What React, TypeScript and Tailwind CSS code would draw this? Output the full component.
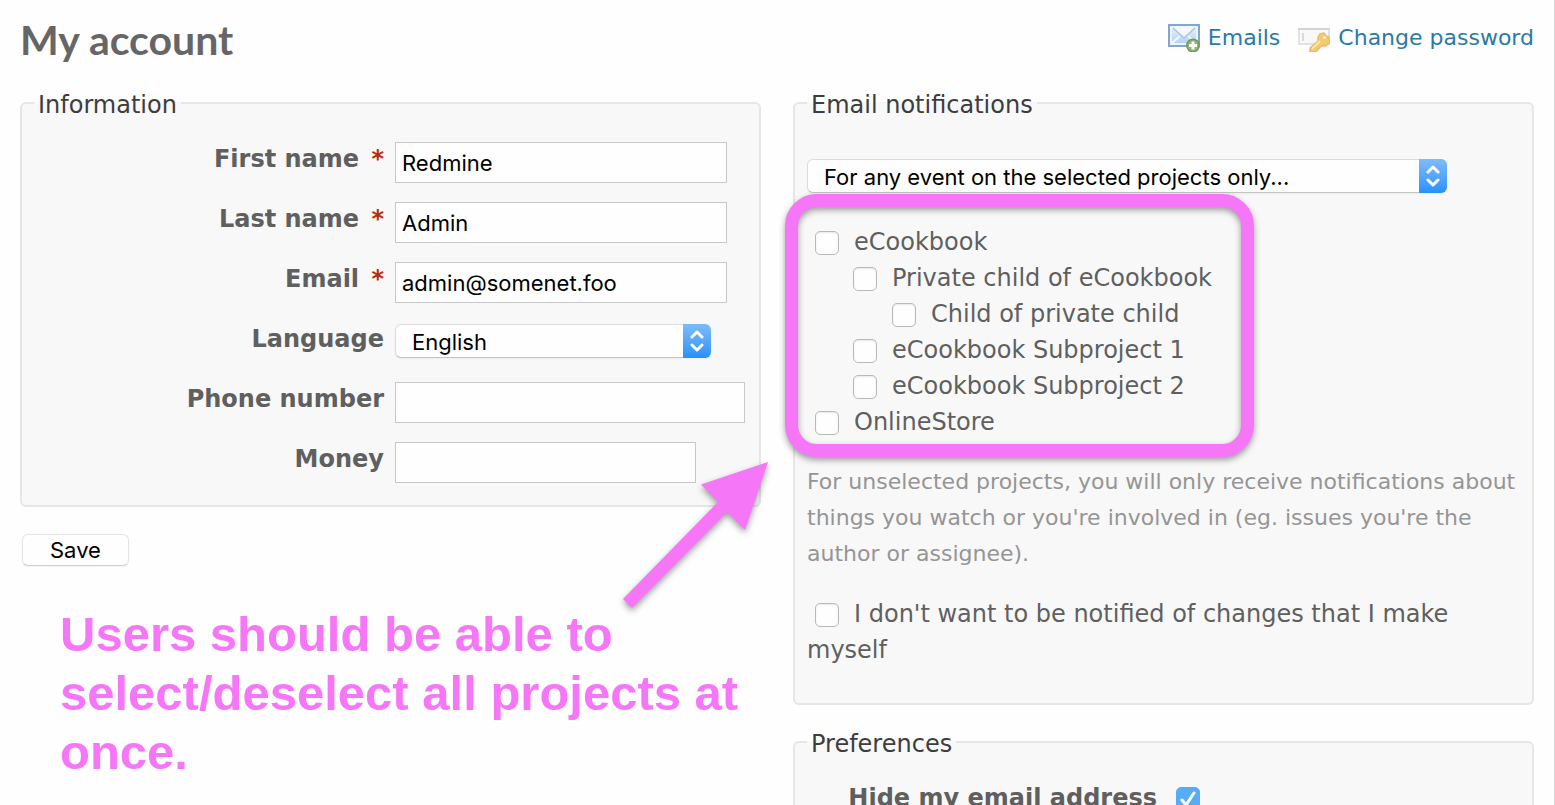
import type { ReactNode } from "react";
import clsx from "clsx";

interface Project {
  id: string;
  name: string;
  level: 0 | 1 | 2;
}

const PROJECTS: Project[] = [
  { id: "p1", name: "eCookbook", level: 0 },
  { id: "p2", name: "Private child of eCookbook", level: 1 },
  { id: "p3", name: "Child of private child", level: 2 },
  { id: "p4", name: "eCookbook Subproject 1", level: 1 },
  { id: "p5", name: "eCookbook Subproject 2", level: 1 },
  { id: "p6", name: "OnlineStore", level: 0 },
];

const INDENT = { 0: "ml-2", 1: "ml-[46px]", 2: "ml-[85px]" };

function MailAddIcon() {
  return (
    <svg width="32" height="28" viewBox="0 0 32 28" aria-hidden="true">
      <defs>
        <linearGradient id="mail-fill" x1="0" y1="0" x2="0" y2="1">
          <stop offset="0" stopColor="#e4effb" />
          <stop offset="1" stopColor="#b4d3f3" />
        </linearGradient>
      </defs>
      <rect x="1" y="1" width="30" height="21" fill="#eef5fd" stroke="#82a5d3" strokeWidth="2" />
      <rect x="4" y="4" width="24" height="15" fill="url(#mail-fill)" />
      <path d="M4 19l8-7M28 19l-8-7" fill="none" stroke="#f4f9ff" strokeWidth="2" />
      <path d="M5 4l11 10L27 4z" fill="#f2f8fe" />
      <path d="M5 4l11 10L27 4" fill="none" stroke="#a5c4ea" strokeWidth="1.500" />
      <circle cx="25" cy="21.500" r="7" fill="#6f9a58" />
      <circle cx="25" cy="21.500" r="5.500" fill="#90b377" />
      <path d="M25 17.500v8M21 21.500h8" stroke="#fff" strokeWidth="3" />
    </svg>
  );
}

function PasswordIcon() {
  return (
    <svg width="32" height="28" viewBox="0 0 32 28" aria-hidden="true">
      <rect x="1" y="5" width="30" height="15" fill="#f8f8f8" stroke="#e2e2e2" strokeWidth="2" />
      <path d="M0 5h32" stroke="#d4d4d4" strokeWidth="2" />
      <path d="M5 9v8" stroke="#cfcfcf" strokeWidth="1.500" />
      <path
        d="M22 10l4-1 2 3 3 1 1 5-4 4h-5l-5 6h-6v-4l8-7v-4z"
        fill="#f4cb6b"
        stroke="#ecbc6c"
        strokeWidth="1.500"
        strokeLinejoin="round"
      />
      <path d="M14 25l8-8" stroke="#fce7a8" strokeWidth="2" />
      <circle cx="26.500" cy="13.500" r="1.500" fill="#fff8e6" />
    </svg>
  );
}

function Box({ legend, className, children }: { legend: string; className?: string; children: ReactNode }) {
  return (
    <fieldset className={clsx("min-w-0 rounded-md border-2 border-[#e6e6e6] bg-[#f8f8f8] px-3", className)}>
      <legend className="px-1 pt-1 text-[#3d3d3d]">{legend}</legend>
      {children}
    </fieldset>
  );
}

function Row({
  id,
  label,
  required,
  children,
}: {
  id: string;
  label: string;
  required?: boolean;
  children: ReactNode;
}) {
  return (
    <div className="flex h-[60px] items-start gap-[11px]">
      <label htmlFor={id} className="w-[350px] shrink-0 pt-px text-right font-bold">
        {label}
        {required && <span className="pl-1 text-[#bb2b10]"> *</span>}
      </label>
      {children}
    </div>
  );
}

function TextInput({ id, value, className }: { id: string; value?: string; className: string }) {
  return (
    <input
      id={id}
      type="text"
      defaultValue={value}
      className={clsx(
        "mt-0.5 h-[41px] min-w-0 border border-[#c8c8c8] bg-[#fefefe] px-1.5 font-[Inter,sans-serif] text-[22px] text-black",
        className
      )}
    />
  );
}

function Select({ id, label, option, className }: { id: string; label?: string; option: string; className: string }) {
  return (
    <div className={clsx("relative h-[34px] min-w-0", className)}>
      <select
        id={id}
        aria-label={label}
        className="block h-full w-full appearance-none rounded-md border border-[#dcdcdc] border-b-[#c4c4c4] bg-[#fefefe] pt-0.5 pr-8 pl-4 font-[Inter,sans-serif] text-[22px] leading-7 text-black shadow-xs"
      >
        <option>{option}</option>
      </select>
      <span className="pointer-events-none absolute inset-y-0 right-0 flex w-7 items-center justify-center rounded-r-md bg-linear-to-b from-[#7dbcf8] to-[#2491fa]">
        <svg width="14" height="22" viewBox="0 0 14 22" fill="none" stroke="#fff" strokeWidth="3" aria-hidden="true">
          <path d="M2 7l5-5 5 5M2 15l5 5 5-5" strokeLinecap="round" strokeLinejoin="round" />
        </svg>
      </span>
    </div>
  );
}

function Checkbox({ id, checked, className }: { id: string; checked?: boolean; className?: string }) {
  return (
    <span className={clsx("relative inline-block size-6 shrink-0", className)}>
      <input
        id={id}
        type="checkbox"
        defaultChecked={checked}
        className="peer block size-6 appearance-none rounded-[5px] border border-[#b9b9b9] bg-[#fefefe] shadow-[inset_0_1px_2px_#00000018] checked:border-[#57acf5] checked:bg-[#57acf5] checked:shadow-none"
      />
      <svg
        viewBox="0 0 24 24"
        fill="none"
        stroke="#fff"
        strokeWidth="3"
        className="pointer-events-none absolute inset-0 hidden peer-checked:block"
        aria-hidden="true"
      >
        <path d="M6 13l4 5 8-12" strokeLinecap="round" strokeLinejoin="round" />
      </svg>
    </span>
  );
}

function Arrow() {
  return (
    <svg
      width="150"
      height="152"
      viewBox="0 0 150 152"
      className="pointer-events-none absolute -right-2 bottom-[-105px] drop-shadow-[0_3px_3px_#00000060]"
      aria-hidden="true"
    >
      <path d="M149 2L82 24.500 99 42 4 139l9 9 95-96 18 18z" fill="#f577f8" />
    </svg>
  );
}

export default function App() {
  return (
    <div className="h-screen overflow-hidden border-r border-[#d8d8d8] bg-[#fefefe] px-5 font-['DejaVu_Sans',sans-serif] text-[24px] leading-9 text-[#5f5f5f]">
      <header className="flex items-start justify-between pt-5">
        <h1 className="font-[Lato,sans-serif] text-[41px] leading-10 font-bold text-[#666]">My account</h1>
        <nav className="flex gap-[18px] text-[22px] text-[#2a7aa8]">
          <a href="#emails" className="flex items-center gap-2">
            <MailAddIcon />
            Emails
          </a>
          <a href="#password" className="flex items-center gap-2">
            <PasswordIcon />
            Change password
          </a>
        </nav>
      </header>

      <main className="mt-[23px] grid grid-cols-2 items-start gap-8">
        <div>
          <div className="relative">
            <Box legend="Information" className="pb-[5px]">
              <div className="pt-[17px]">
                <Row id="firstname" label="First name" required>
                  <TextInput id="firstname" value="Redmine" className="w-[332px]" />
                </Row>
                <Row id="lastname" label="Last name" required>
                  <TextInput id="lastname" value="Admin" className="w-[332px]" />
                </Row>
                <Row id="mail" label="Email" required>
                  <TextInput id="mail" value="admin@somenet.foo" className="w-[332px]" />
                </Row>
                <Row id="language" label="Language">
                  <Select id="language" option="English" className="mt-1 w-[316px]" />
                </Row>
                <Row id="phone" label="Phone number">
                  <TextInput id="phone" className="w-[350px]" />
                </Row>
                <Row id="money" label="Money">
                  <TextInput id="money" className="w-[301px]" />
                </Row>
              </div>
            </Box>
            <Arrow />
          </div>

          <button
            type="button"
            className="mt-[27px] ml-0.5 block h-8 rounded-md border border-[#e4e4e4] border-b-[#cfcfcf] px-[27px] font-[Inter,sans-serif] text-[22px] leading-7 text-black shadow-xs"
          >
            Save
          </button>

          <p className="mt-[39px] ml-10 max-w-[690px] font-['Liberation_Sans',sans-serif] text-[49px] leading-[59px] font-bold text-[#f577f8]">
            Users should be able to select/deselect all projects at once.
          </p>
        </div>

        <div>
          <Box legend="Email notifications" className="pb-[35px]">
            <Select
              id="notify"
              label="Email notifications"
              option="For any event on the selected projects only..."
              className="mt-9 w-[640px] max-w-full"
            />
            <div className="relative mt-[31px]">
              <ul>
                {PROJECTS.map((project) => (
                  <li key={project.id} className="flex items-center">
                    <Checkbox id={project.id} className={clsx("mt-0.5", INDENT[project.level])} />
                    <label htmlFor={project.id} className="pl-[15px]">
                      {project.name}
                    </label>
                  </li>
                ))}
              </ul>
              {/* highlight around the project list */}
              <div className="pointer-events-none absolute -top-[30px] -bottom-[17px] -left-[22px] w-[469px] rounded-[32px] border-[13px] border-[#f577f8] drop-shadow-[0_3px_3px_#00000060]" />
            </div>
            <p className="mt-6 text-[22px] text-[#959595]">
              For unselected projects, you will only receive notifications about things you watch or you're involved in
              (eg. issues you're the author or assignee).
            </p>
            <p className="mt-6">
              <Checkbox id="no-self" className="mr-[15px] ml-2 align-middle" />
              <label htmlFor="no-self">I don't want to be notified of changes that I make myself</label>
            </p>
          </Box>

          <Box legend="Preferences" className="mt-[17px]">
            <div className="pt-[17px]">
              <Row id="hide-mail" label="Hide my email address">
                <Checkbox id="hide-mail" checked className="mt-2 ml-2" />
              </Row>
            </div>
          </Box>
        </div>
      </main>
    </div>
  );
}
